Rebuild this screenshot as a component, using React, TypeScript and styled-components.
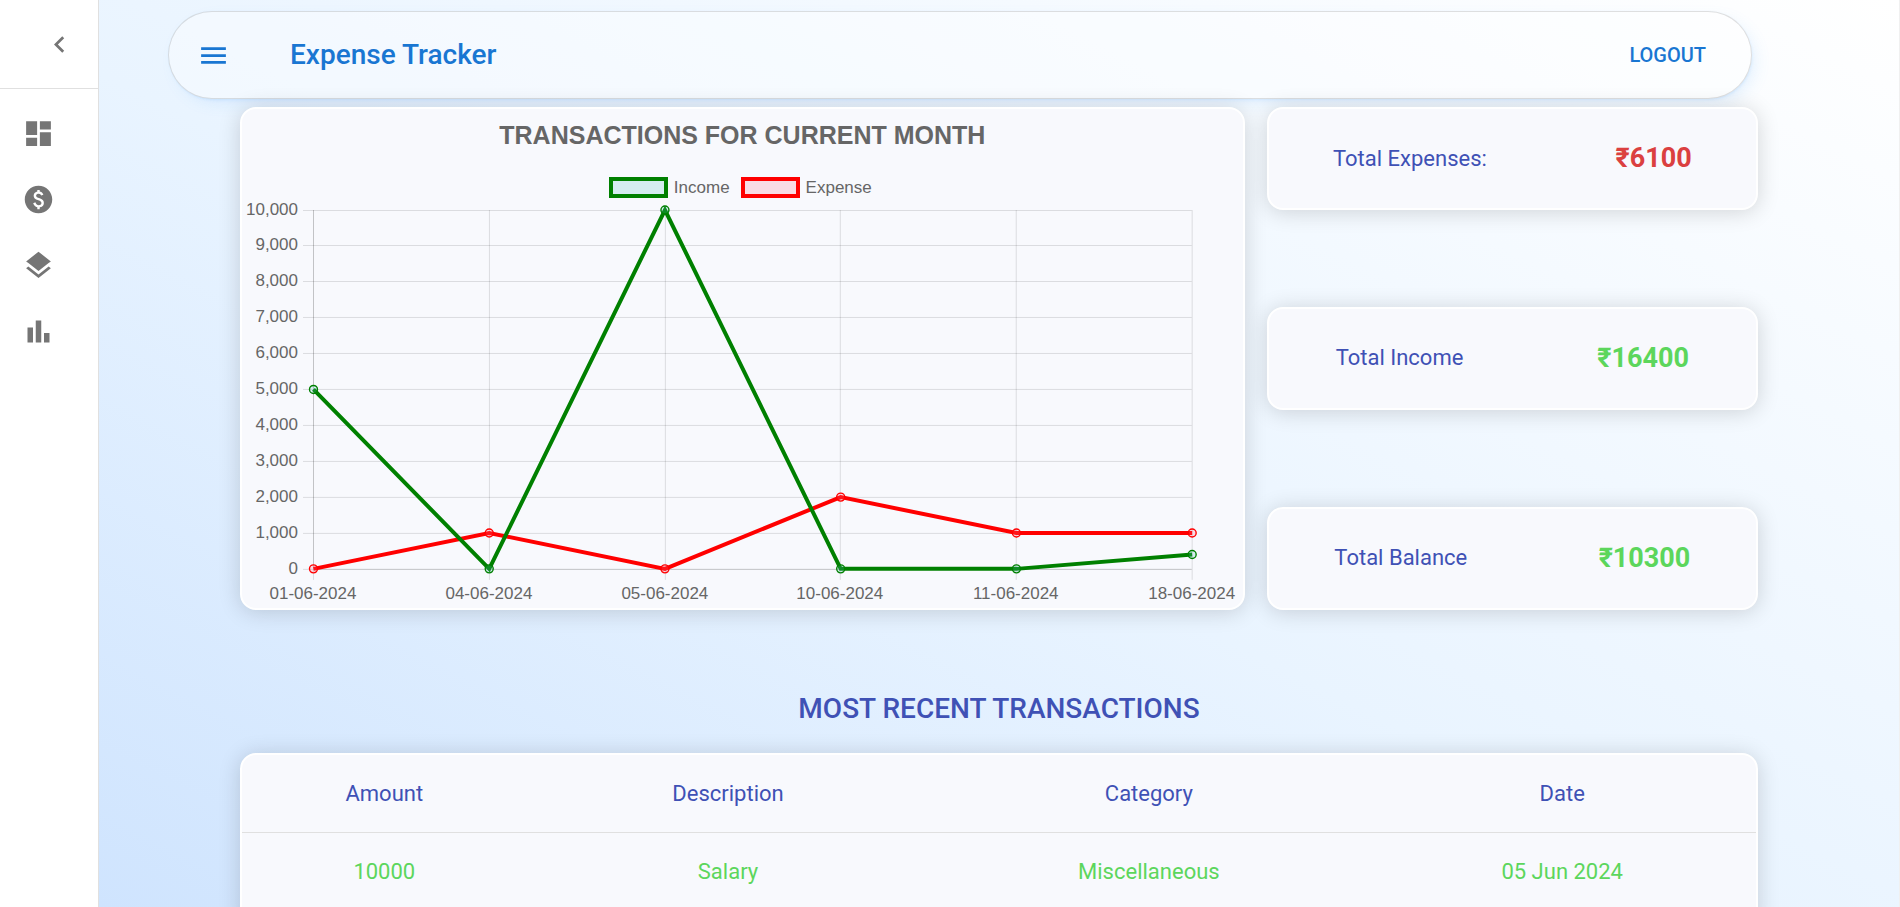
import React from "react";
import styled, { createGlobalStyle } from "styled-components";
import {
  MdBarChart,
  MdChevronLeft,
  MdDashboard,
  MdLayers,
  MdMenu,
  MdPaid,
} from "react-icons/md";

const color = {
  primary: "#1976d2",
  indigo: "#3f51b5",
  income: "#5cd65c",
  expense: "#db4040",
  icon: "#757575",
  divider: "rgba(0, 0, 0, 0.12)",
  surface: "#f8f9fd",
  chartText: "#666666",
};

const GlobalStyle = createGlobalStyle`
  *, *::before, *::after { box-sizing: border-box; }
  body {
    margin: 0;
    font-family: Roboto, "Noto Sans", sans-serif;
    font-size: 22px;
    line-height: 32px;
  }
`;

const Shell = styled.div`
  display: flex;
  height: 100vh;
  overflow: hidden;
`;

const Sidebar = styled.aside`
  flex: 0 0 99px;
  background: #ffffff;
  border-right: 1px solid ${color.divider};
`;

const SidebarTop = styled.div`
  display: flex;
  align-items: center;
  justify-content: flex-end;
  height: 89px;
  padding-right: 22px;
  border-bottom: 1px solid ${color.divider};
`;

const IconButton = styled.button<{ $tone?: string }>`
  display: inline-flex;
  align-items: center;
  justify-content: center;
  padding: 0;
  border: 0;
  background: none;
  color: ${(p) => p.$tone ?? color.icon};
  cursor: pointer;
`;

const NavList = styled.nav`
  display: flex;
  flex-direction: column;
  padding: 11px 0;
`;

const NavItem = styled.a`
  display: flex;
  align-items: center;
  height: 66px;
  padding-left: 22px;
  color: ${color.icon};
`;

const Main = styled.main`
  flex: 1;
  min-width: 0;
  border-right: 1px solid #f0f0f0;
  background: linear-gradient(to top right, #cfe4fe, #e9f4ff 46%, #ffffff);
`;

const Header = styled.header`
  display: flex;
  align-items: center;
  height: 88px;
  margin: 11px 147px 8px 69px;
  padding: 0 45px 0 28px;
  border: 1px solid ${color.divider};
  border-radius: 44px;
  background: rgba(255, 255, 255, 0.4);
  box-shadow:
    0 0 1px rgba(85, 166, 246, 0.1),
    1px 2px 3px -1px rgba(85, 166, 246, 0.15),
    6px 6px 16px -3px rgba(85, 166, 246, 0.15);
`;

const Brand = styled.h1`
  flex: 1;
  margin: 0 0 0 60px;
  font-size: 28px;
  font-weight: 500;
  color: ${color.primary};
`;

const LogoutButton = styled.button`
  padding: 0;
  border: 0;
  background: none;
  font-family: inherit;
  font-size: 20px;
  font-weight: 500;
  line-height: 32px;
  text-transform: uppercase;
  color: ${color.primary};
  cursor: pointer;
`;

const Content = styled.div`
  margin: 0 141px;
`;

const Overview = styled.section`
  display: grid;
  grid-template-columns: repeat(3, 1fr);
  column-gap: 22px;
`;

const Card = styled.div`
  border: 2px solid #ffffff;
  border-radius: 16px;
  background: ${color.surface};
  box-shadow: 0 2px 22px rgba(0, 0, 0, 0.16);
`;

const ChartCard = styled(Card)`
  grid-column: span 2;
  font-family: "Liberation Sans", Arial, sans-serif;
  line-height: 33px;
  color: ${color.chartText};
`;

const ChartTitle = styled.h2`
  margin: 10px 0 0;
  font-size: 25px;
  font-weight: 700;
  text-align: center;
`;

const Legend = styled.ul`
  display: flex;
  justify-content: center;
  gap: 11px;
  margin: 19px 0 0;
  padding: 0 4px 0 0;
  list-style: none;
  font-size: 17px;
`;

const LegendItem = styled.li`
  display: flex;
  align-items: center;
  gap: 6px;
`;

const Swatch = styled.span<{ $line: string; $fill: string }>`
  width: 59px;
  height: 21px;
  border: 4px solid ${(p) => p.$line};
  background: ${(p) => p.$fill};
`;

const Plot = styled.svg`
  display: block;
  width: 100%;
  overflow: visible;
`;

const StatColumn = styled.div`
  display: flex;
  flex-direction: column;
  justify-content: space-between;
`;

const StatCard = styled(Card)`
  display: flex;
  align-items: center;
  justify-content: space-around;
  padding: 33px 0;
  color: ${color.indigo};
`;

const StatValue = styled.strong<{ $tone: string }>`
  font-size: 27px;
  font-weight: 700;
  line-height: 33px;
  color: ${(p) => p.$tone};
`;

const SectionTitle = styled.h2`
  margin: 83px 0 28px;
  font-size: 28px;
  font-weight: 500;
  text-align: center;
  text-transform: uppercase;
  color: ${color.indigo};
`;

const TableCard = styled(Card)`
  padding-bottom: 22px;
`;

const Table = styled.table`
  width: 100%;
  border-collapse: separate;
  border-spacing: 0;
  table-layout: fixed;
  line-height: 33px;
`;

const HeadCell = styled.th<{ $width: string }>`
  width: ${(p) => p.$width};
  height: 78px;
  padding: 0 22px;
  border-bottom: 1px solid #e0e0e0;
  font-weight: 400;
  text-align: center;
  color: ${color.indigo};
`;

const Cell = styled.td`
  height: 77px;
  padding: 0 22px;
  text-align: center;
  color: ${color.income};
`;

const dates = ["01-06-2024", "04-06-2024", "05-06-2024", "10-06-2024", "11-06-2024", "18-06-2024"];

const series = [
  { name: "Income", line: "#008000", fill: "rgba(75, 192, 192, 0.2)", values: [5000, 0, 10000, 0, 0, 400] },
  { name: "Expense", line: "#ff0000", fill: "rgba(255, 99, 132, 0.2)", values: [0, 1000, 0, 2000, 1000, 1000] },
];

const plot = { width: 1001, height: 404, left: 71, right: 950, top: 6, bottom: 365 };
const xAt = (i: number) => plot.left + ((plot.right - plot.left) * i) / (dates.length - 1);
const yAt = (v: number) => plot.bottom - ((plot.bottom - plot.top) * v) / 10000;
const crisp = (n: number) => Math.floor(n) + 0.5;

function LineChart() {
  const ticks = Array.from({ length: 11 }, (_, i) => i * 1000);
  return (
    <Plot
      viewBox={`0 0 ${plot.width} ${plot.height}`}
      role="img"
      aria-label="Income and expense per day"
      fontSize={17}
      fill={color.chartText}
    >
      {ticks.map((v) => (
        <g key={v}>
          <line
            x1={plot.left - 10}
            x2={plot.right}
            y1={crisp(yAt(v))}
            y2={crisp(yAt(v))}
            stroke="#000000"
            strokeOpacity={0.12}
          />
          <text x={plot.left - 15} y={Math.floor(yAt(v)) + 5} textAnchor="end">
            {v.toLocaleString("en-US")}
          </text>
        </g>
      ))}
      {dates.map((d, i) => (
        <g key={d}>
          <line
            x1={Math.round(xAt(i)) + 0.5}
            x2={Math.round(xAt(i)) + 0.5}
            y1={plot.top}
            y2={plot.bottom + 11}
            stroke="#000000"
            strokeOpacity={0.12}
          />
          <text x={Math.round(xAt(i))} y={plot.bottom + 30} textAnchor="middle">
            {d}
          </text>
        </g>
      ))}
      <path
        d={`M${plot.left + 0.5} ${plot.top}V${plot.bottom + 0.5}H${plot.right}`}
        fill="none"
        stroke="#000000"
        strokeOpacity={0.12}
      />
      {[...series].reverse().map((s) => (
        <g key={s.name} stroke={s.line}>
          <polyline
            points={s.values.map((v, i) => `${xAt(i) + 0.5},${yAt(v)}`).join(" ")}
            fill="none"
            strokeWidth={4}
          />
          {s.values.map((v, i) => (
            <circle key={i} cx={xAt(i) + 0.5} cy={yAt(v)} r={4} fill={s.fill} strokeWidth={1.4} />
          ))}
        </g>
      ))}
    </Plot>
  );
}

const navItems = [
  { label: "Dashboard", Icon: MdDashboard },
  { label: "Transactions", Icon: MdPaid },
  { label: "Categories", Icon: MdLayers },
  { label: "Reports", Icon: MdBarChart },
];

const stats = [
  { label: "Total Expenses:", value: "₹6100", tone: color.expense },
  { label: "Total Income", value: "₹16400", tone: color.income },
  { label: "Total Balance", value: "₹10300", tone: color.income },
];

const columns = [
  { label: "Amount", width: "18.8%" },
  { label: "Description", width: "26.6%" },
  { label: "Category", width: "29%" },
  { label: "Date", width: "25.6%" },
];

const rows = [["10000", "Salary", "Miscellaneous", "05 Jun 2024"]];

export default function App() {
  return (
    <>
      <GlobalStyle />
      <Shell>
        <Sidebar>
          <SidebarTop>
            <IconButton type="button" aria-label="Collapse sidebar">
              <MdChevronLeft size={33} />
            </IconButton>
          </SidebarTop>
          <NavList aria-label="Main">
            {navItems.map(({ label, Icon }) => (
              <NavItem key={label} href="#" aria-label={label}>
                <Icon size={33} />
              </NavItem>
            ))}
          </NavList>
        </Sidebar>
        <Main>
          <Header>
            <IconButton type="button" aria-label="Open menu" $tone={color.primary}>
              <MdMenu size={33} />
            </IconButton>
            <Brand>Expense Tracker</Brand>
            <LogoutButton type="button">Logout</LogoutButton>
          </Header>
          <Content>
            <Overview>
              <ChartCard>
                <ChartTitle>TRANSACTIONS FOR CURRENT MONTH</ChartTitle>
                <Legend>
                  {series.map((s) => (
                    <LegendItem key={s.name}>
                      <Swatch $line={s.line} $fill={s.fill} />
                      {s.name}
                    </LegendItem>
                  ))}
                </Legend>
                <LineChart />
              </ChartCard>
              <StatColumn>
                {stats.map((s) => (
                  <StatCard key={s.label}>
                    <span>{s.label}</span>
                    <StatValue $tone={s.tone}>{s.value}</StatValue>
                  </StatCard>
                ))}
              </StatColumn>
            </Overview>
            <SectionTitle>Most Recent Transactions</SectionTitle>
            <TableCard>
              <Table>
                <thead>
                  <tr>
                    {columns.map((c) => (
                      <HeadCell key={c.label} scope="col" $width={c.width}>
                        {c.label}
                      </HeadCell>
                    ))}
                  </tr>
                </thead>
                <tbody>
                  {rows.map((r) => (
                    <tr key={r.join()}>
                      {r.map((c) => (
                        <Cell key={c}>{c}</Cell>
                      ))}
                    </tr>
                  ))}
                </tbody>
              </Table>
            </TableCard>
          </Content>
        </Main>
      </Shell>
    </>
  );
}
